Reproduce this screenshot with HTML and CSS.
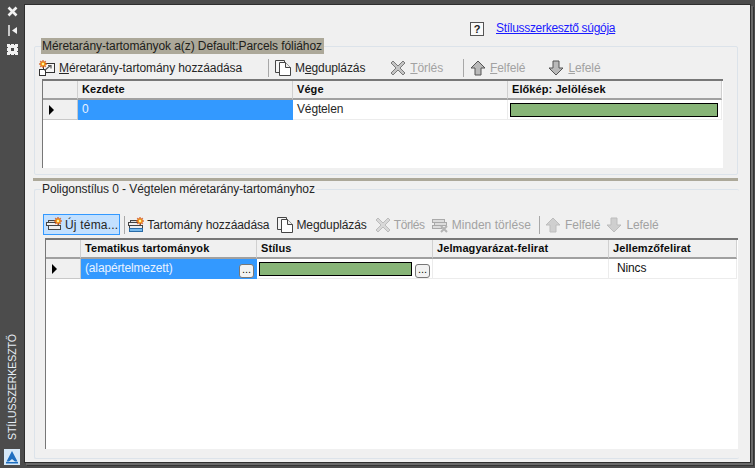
FILE: index.html
```html
<!DOCTYPE html>
<html lang="hu">
<head>
<meta charset="utf-8">
<title>Stílusszerkesztő</title>
<link rel="stylesheet" href="styles.css">
</head>
<body>
<svg class="defs" width="0" height="0">
  <symbol id="star" viewBox="0 0 8 8"><path d="M4 0l.8 2 2-.9-.8 2 2 .9-2 .9.8 2-2-.9L4 8l-.8-2-2 .9.8-2L0 4l2-.9-.8-2 2 .9z" fill="#f59a12" stroke="#c8401a" stroke-width=".5"/><circle cx="4" cy="4" r="1.2" fill="#fff2a0"/></symbol>
  <symbol id="i-add" viewBox="0 0 16 16"><rect x="4.500" y="3.500" width="11" height="9" fill="#f6f6f6" stroke="#333"/><rect x=".5" y="9.500" width="6" height="6" fill="#fff" stroke="#333"/><path d="M5.500 10.500l6-5M9 5.500h3v3" fill="none" stroke="#555" stroke-width="1.200"/><use href="#star" x="0" y="0" width="8" height="8"/></symbol>
  <symbol id="i-dup" viewBox="0 0 16 16"><path d="M.5 .5h9v12h-9z" fill="#f4f4f4" stroke="#444"/><path d="M4.500 2.500h6l5 5v8h-11z" fill="#fff" stroke="#444"/><path d="M10.500 2.500v5h5" fill="#eee" stroke="#444"/></symbol>
  <symbol id="i-x" viewBox="0 0 16 16"><path d="M1 3l2-2 5 5 5-5 2 2-5 5 5 5-2 2-5-5-5 5-2-2 5-5z" fill="#c4c4c4" stroke="#7b7b7b"/></symbol>
  <symbol id="i-up" viewBox="0 0 16 16"><path d="M8 1l7 7h-4v7H5V8H1z" fill="#b9b9b9" stroke="#555"/></symbol>
  <symbol id="i-down" viewBox="0 0 16 16"><path d="M8 15L1 8h4V1h6v7h4z" fill="#b9b9b9" stroke="#555"/></symbol>
  <symbol id="i-up-off" viewBox="0 0 16 16"><path d="M8 1l7 7h-4v7H5V8H1z" fill="#cfcfcf" stroke="#bdbdbd"/></symbol>
  <symbol id="i-down-off" viewBox="0 0 16 16"><path d="M8 15L1 8h4V1h6v7h4z" fill="#cfcfcf" stroke="#bdbdbd"/></symbol>
  <symbol id="i-x-off" viewBox="0 0 16 16"><path d="M1 3l2-2 5 5 5-5 2 2-5 5 5 5-2 2-5-5-5 5-2-2 5-5z" fill="#d8d8d8" stroke="#bcbcbc"/></symbol>
  <symbol id="i-theme" viewBox="0 0 16 16"><rect x="2.500" y="3.500" width="8" height="2" fill="#ddd" stroke="#444"/><rect x=".5" y="5.500" width="12" height="3" fill="#f2f2f2" stroke="#444"/><rect x="2.500" y="8.500" width="12" height="4" fill="#eee" stroke="#444"/><use href="#star" x="8" y="0" width="8" height="8"/></symbol>
  <symbol id="i-range" viewBox="0 0 16 16"><rect x="2.500" y="3.500" width="8" height="2" fill="#ddd" stroke="#444"/><rect x=".5" y="5.500" width="12" height="3" fill="#f2f2f2" stroke="#444"/><rect x="1.500" y="8.500" width="13" height="3" fill="#eee" stroke="#444"/><rect x="1.500" y="11.500" width="13" height="3" fill="#79b9ea" stroke="#2a6ca8"/><use href="#star" x="8" y="0" width="8" height="8"/></symbol>
  <symbol id="i-clear" viewBox="0 0 16 16"><rect x=".5" y="2.500" width="12" height="3" fill="#ddd" stroke="#aaa"/><rect x="2.500" y="5.500" width="12" height="3" fill="#ddd" stroke="#aaa"/><rect x=".5" y="8.500" width="9" height="3" fill="#ddd" stroke="#aaa"/><path d="M9 9l6 6M15 9l-6 6" stroke="#b4b4b4" stroke-width="2"/></symbol>
</svg>

<div class="app">
  <aside class="rail">
    <svg class="rail-icon" width="13" height="13" viewBox="0 0 13 13"><path d="M2.500 2.500l8 8M10.500 2.500l-8 8" stroke="#f2f2f2" stroke-width="2.600"/></svg>
    <svg class="rail-icon" width="13" height="13" viewBox="0 0 13 13"><path d="M3 1v11" stroke="#f2f2f2" stroke-width="1.500"/><path d="M6 6.500L11 3v7z" fill="#f2f2f2"/></svg>
    <svg class="rail-icon" width="13" height="13" viewBox="0 0 13 13"><path d="M1 1h3v1h1V1h3v1h1V1h3v3h-1v1h1v3h-1v1h1v3H9v-1H8v1H5v-1H4v1H1V9h1V8H1V5h1V4H1z" fill="#f2f2f2"/><rect x="5" y="5" width="3" height="3" fill="#4a4a4a"/></svg>
    <div class="rail-title">STÍLUSSZERKESZTŐ</div>
    <svg class="rail-logo" width="16" height="16" viewBox="0 0 16 16"><rect width="16" height="16" fill="#d7e9f8"/><path d="M8 2l5.500 10.500H11L8 10l-3 2.500H2.500z" fill="#1f6fc0"/><path d="M2 13h12v1.500H2z" fill="#1f6fc0"/></svg>
  </aside>

  <main class="panel">
    <div class="help">
      <span class="help-box">?</span>
      <a class="help-link" href="#">Stílusszerkesztő súgója</a>
    </div>

    <fieldset class="group group-top">
      <legend class="legend-hi">Méretarány-tartományok a(z) Default:Parcels fóliához</legend>
      <div class="tb tb-top">
        <span class="tb-item t1-add"><svg class="ico"><use href="#i-add"/></svg><span><u>M</u>éretarány-tartomány hozzáadása</span></span>
        <span class="sep t1-sep1"></span>
        <span class="tb-item t1-dup"><svg class="ico"><use href="#i-dup"/></svg><span>M<u>e</u>gduplázás</span></span>
        <span class="tb-item off t1-del"><svg class="ico"><use href="#i-x"/></svg><span><u>T</u>örlés</span></span>
        <span class="sep t1-sep2"></span>
        <span class="tb-item off t1-up"><svg class="ico"><use href="#i-up"/></svg><span><u>F</u>elfelé</span></span>
        <span class="tb-item off t1-down"><svg class="ico"><use href="#i-down"/></svg><span><u>L</u>efelé</span></span>
      </div>
      <div class="grid grid-a">
        <div class="gh"></div><div class="gh">Kezdete</div><div class="gh">Vége</div><div class="gh">Előkép: Jelölések</div>
        <div class="rh"><span class="tri"></span></div>
        <div class="gc sel">0</div>
        <div class="gc">Végtelen</div>
        <div class="gc"><span class="swatch swatch-a"></span></div>
      </div>
    </fieldset>

    <div class="splitter"></div>

    <fieldset class="group group-bottom">
      <legend class="legend-plain">Poligonstílus 0 - Végtelen méretarány-tartományhoz</legend>
      <div class="tb tb-bottom">
        <span class="tb-item active"><svg class="ico"><use href="#i-theme"/></svg><span>Új téma...</span></span>
        <span class="sep t2-sep1"></span>
        <span class="tb-item t2-range"><svg class="ico"><use href="#i-range"/></svg><span>Tartomány hozzáadása</span></span>
        <span class="tb-item t2-dup"><svg class="ico"><use href="#i-dup"/></svg><span>Megduplázás</span></span>
        <span class="tb-item off t2-del"><svg class="ico"><use href="#i-x-off"/></svg><span>Törlés</span></span>
        <span class="tb-item off t2-clear"><svg class="ico"><use href="#i-clear"/></svg><span>Minden törlése</span></span>
        <span class="sep t2-sep2"></span>
        <span class="tb-item off t2-up"><svg class="ico"><use href="#i-up-off"/></svg><span>Felfelé</span></span>
        <span class="tb-item off t2-down"><svg class="ico"><use href="#i-down-off"/></svg><span>Lefelé</span></span>
      </div>
      <div class="grid grid-b">
        <div class="gh"></div><div class="gh">Tematikus tartományok</div><div class="gh">Stílus</div><div class="gh">Jelmagyarázat-felirat</div><div class="gh">Jellemzőfelirat</div>
        <div class="rh"><span class="tri"></span></div>
        <div class="gc sel split"><span>(alapértelmezett)</span><span class="dots">...</span></div>
        <div class="gc split"><span class="swatch swatch-b"></span><span class="dots">...</span></div>
        <div class="gc"></div>
        <div class="gc nincs">Nincs</div>
      </div>
    </fieldset>
  </main>
</div>
</body>
</html>
```

FILE: styles.css
```css
* { box-sizing: border-box; }
html, body { margin: 0; padding: 0; }
body { font: 12px "Liberation Sans", Arial, sans-serif; color: #262626; background: #4a4a4a; }
.defs { display: none; }

.app { width: 755px; height: 468px; display: flex; background: #4c4c4c; overflow: hidden; }

.rail { width: 25px; padding: 5px 0 3px 4px; display: flex; flex-direction: column; align-items: flex-start; flex: none; }
.rail-icon { margin: 0 0 6px 2px; flex: none; }
.rail-title { margin-top: auto; margin-bottom: 9px; margin-left: 1px; writing-mode: vertical-rl; transform: rotate(180deg); color: #e6edf5; font-size: 10.500px; letter-spacing: -.05px; line-height: 15px; }
.rail-logo { flex: none; }

.panel { width: 725px; height: 457px; margin-top: 5px; background: #f0f0f0; padding: 0 12px 0 8px; box-shadow: 0 0 0 1px #2e2e2e, 2px 2px 0 1px #6a6a6a, 3px 3px 0 1px #333; display: flex; flex-direction: column; }

.help { height: 33px; flex: none; display: flex; align-items: flex-end; padding: 0 0 2px 437px; }
.help-box { width: 14px; height: 14px; border: 1px solid #555; background: #fafafa; font: bold 11px/12px "Liberation Sans", sans-serif; text-align: center; color: #222; }
.help-link { margin-left: 12px; color: #1a1aff; line-height: 15px; letter-spacing: -.3px; }

.group { margin: 0; padding: 0; min-width: 0; border: 1px solid #dce3ea; border-radius: 2px; background: transparent; }
.group-top { width: 704px; height: 137px; margin-left: 1px; padding: 0 0 0 7px; flex: none; }
.group-bottom { width: 705px; height: 278px; margin-left: 1px; border-right: 0; padding: 0 0 0 10px; flex: none; }
.legend-hi { margin-left: -1px; padding: 0 2px 0 1px; height: 16px; line-height: 16px; background: #aca899; color: #20201a; letter-spacing: -.08px; }
.legend-plain { margin-left: -4px; padding: 0 1px; height: 16px; line-height: 16px; letter-spacing: -.08px; }

.splitter { height: 3px; margin: 3px 0 0 0; width: 705px; flex: none; background: #aca899; }

.tb { display: flex; align-items: center; height: 21px; letter-spacing: -.1px; }
.tb-top { margin: 3px 0 1px -3px; }
.tb-bottom { margin: 17px 0 0 -2px; }
.tb-item { display: flex; align-items: center; gap: 4px; white-space: nowrap; flex: none; }
.ico { width: 16px; height: 16px; flex: none; }
.off { color: #a2a2a2; }
.sep { width: 1px; height: 18px; background: #a8a8a8; flex: none; }

.t1-sep1 { margin: 0 6px 0 26px; }
.t1-del { margin-left: 25px; }
.t1-sep2 { margin: 0 6px 0 20px; }
.t1-down { margin-left: 23px; }

.active { height: 21px; padding: 0 1px 0 2px; background: #c2e0ff; border: 1px solid #3399ff; gap: 3px; letter-spacing: .2px; }
.t2-sep1 { margin: 0 3px 0 4px; }
.t2-range { gap: 3px; }
.t2-dup { margin-left: 8px; gap: 3px; }
.t2-del { margin-left: 8px; gap: 3px; letter-spacing: -.4px; }
.t2-clear { margin-left: 7px; letter-spacing: .05px; }
.t2-sep2 { margin: 0 5px 0 8px; }
.t2-down { margin-left: 6px; }

.grid { display: grid; background: #fff; border-left: 1px solid #777; border-top: 2px solid #777; grid-auto-rows: min-content; align-content: start; }
.grid-a { width: 681px; height: 89px; grid-template-columns: 35px 215px 215px 214px; grid-template-rows: 19px 20px; }
.grid-b { width: 693px; height: 211px; margin: 3px 0 0 0; grid-template-columns: 35px 176px 176px 176px 128px; grid-template-rows: 19px 20px; }

.gh { background: #f0f0f0; border-bottom: 2px solid #a0a0a0; border-right: 1px solid #d0d0d0; padding: 0 4px; font-weight: bold; font-size: 11px; letter-spacing: .08px; line-height: 17px; white-space: nowrap; color: #0c0c0c; }
.rh { background: #f0f0f0; border-bottom: 1px solid #c8c8c8; border-right: 1px solid #c8c8c8; display: flex; align-items: center; padding-left: 6px; }
.tri { width: 0; height: 0; border-left: 5px solid #000; border-top: 5px solid transparent; border-bottom: 5px solid transparent; }
.gc { border-bottom: 1px solid #ececec; border-right: 1px solid #ececec; padding: 0 4px; line-height: 19px; white-space: nowrap; overflow: hidden; letter-spacing: -.15px; }
.sel { background: #3399ff; color: #e8f2ff; border-color: #3399ff; }
.split { display: flex; justify-content: space-between; align-items: center; padding: 0 2px 0 4px; }
.nincs { padding-left: 8px; color: #111; }
.swatch { display: block; background: #88b578; border: 1.500px solid #000; height: 14px; }
.swatch-a { width: 208px; margin: 3px 0 0 -2px; }
.swatch-b { width: 153px; margin-left: -2px; }
.dots { width: 15px; height: 14px; margin-top: 5px; border: 1px solid #777; border-radius: 3px; background: #f2f2f2; color: #111; font-size: 11px; line-height: 9px; text-align: center; letter-spacing: 0; flex: none; }
```
